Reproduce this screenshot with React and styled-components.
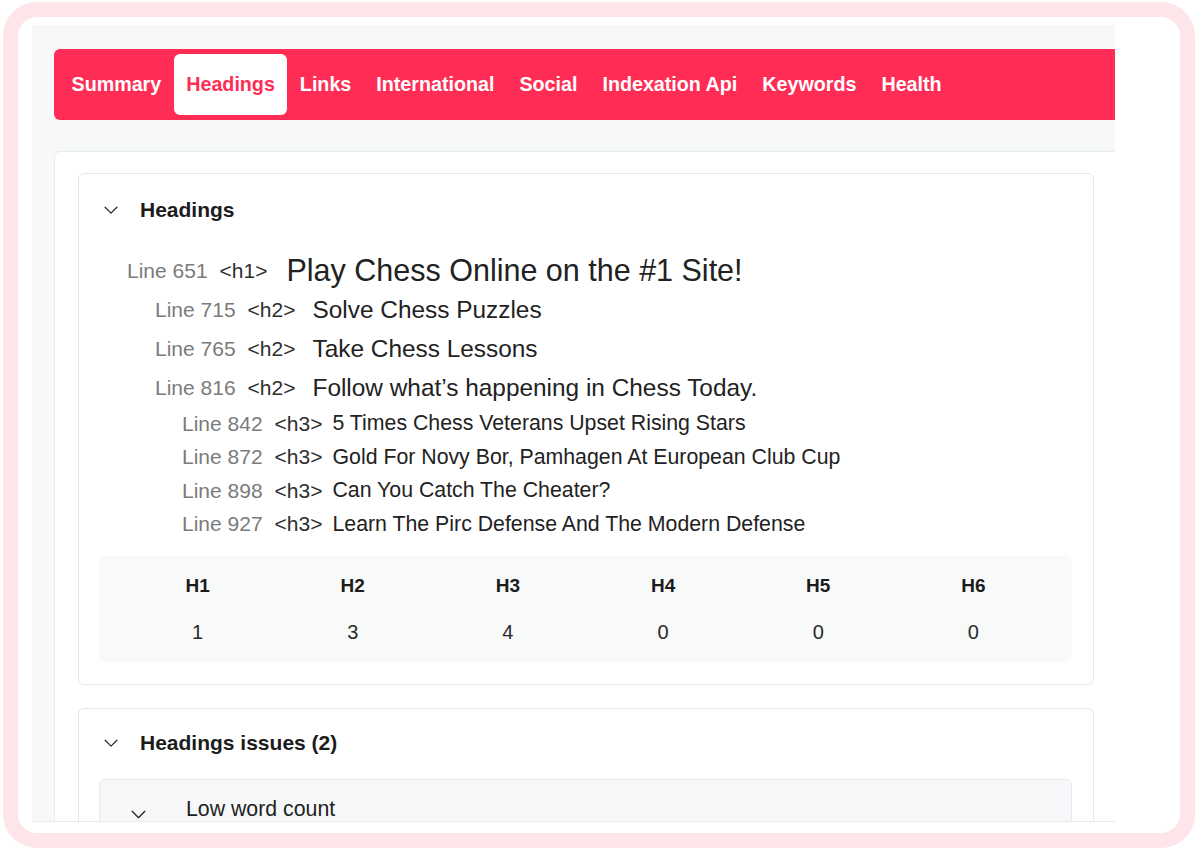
import React from 'react'
import styled, { createGlobalStyle } from 'styled-components'

const GlobalStyle = createGlobalStyle`
* {
  margin: 0;
  padding: 0;
  box-sizing: border-box;
}
body {
  background: #ffffff;
  font-family: 'Liberation Sans', Arial, sans-serif;
  color: #1f1f1f;
}
`

const Frame = styled.div`
  margin: 2px 3px;
  width: 1192px;
  height: 846px;
  border: 15px solid #fde5e9;
  border-radius: 34px;
  background: #ffffff;
  padding: 8px 0 0 14px;
`

const Viewport = styled.div`
  width: 1083px;
  height: 797px;
  overflow: hidden;
  background: #f7f8f8;
  padding: 24px 0 0 22px;
  border-bottom: 1px solid #e8ebee;
`

const Page = styled.div`
  width: 1070px;
  display: flex;
  flex-direction: column;
  gap: 31px;
`

const TabBar = styled.nav`
  height: 71px;
  background: #ff2d55;
  border-radius: 6px;
  padding: 5px;
  display: flex;
  align-items: stretch;
`

const Tab = styled.div`
  display: flex;
  align-items: center;
  padding: 0 12.5px;
  border-radius: 6px;
  font-size: 19.7px;
  font-weight: 700;
  color: ${p => (p.active ? '#ff2d55' : '#ffffff')};
  background: ${p => (p.active ? '#ffffff' : 'transparent')};
`

const OuterCard = styled.div`
  background: #ffffff;
  border: 1px solid #e8ecef;
  border-radius: 6px;
  padding: 21px 29px 40px 23px;
  display: flex;
  flex-direction: column;
  gap: 23px;
`

const Section = styled.section`
  border: 1px solid #e3e7eb;
  border-radius: 6px;
  background: #ffffff;
  padding-bottom: 22px;
`

const SectionHeader = styled.div`
  height: ${p => p.h}px;
  display: flex;
  align-items: center;
  padding-left: 25px;
  gap: 22px;
  font-size: 21px;
  font-weight: 700;
  color: #1c1c1c;
`

const List = styled.div`
  margin-top: 3px;
  display: flex;
  flex-direction: column;
`

const levelStyle = {
  1: { indent: 48, height: 40, size: 30.5, gap: 19 },
  2: { indent: 76, height: 39, size: 24.4, gap: 17 },
  3: { indent: 103, height: 33.5, size: 21.3, gap: 10 },
}

const Row = styled.div`
  height: ${p => levelStyle[p.level].height}px;
  padding-left: ${p => levelStyle[p.level].indent}px;
  display: flex;
  align-items: center;
  white-space: nowrap;
`

const Label = styled.span`
  font-size: 21px;
  color: #7b7b7b;
  margin-right: 12px;
  position: relative;
  top: ${p => (p.level === 1 ? 2 : 1)}px;
`

const Tag = styled.span`
  font-size: 21px;
  color: #2e2e2e;
  margin-right: ${p => levelStyle[p.level].gap}px;
  position: relative;
  top: ${p => (p.level === 1 ? 2 : 1)}px;
`

const Text = styled.span`
  font-size: ${p => levelStyle[p.level].size}px;
  color: #222222;
  position: relative;
  top: 1px;
`

const Counts = styled.div`
  margin: 16px 21px 0 20px;
  background: #f8f9f9;
  border-radius: 6px;
  padding: 17px 21px 17px;
  display: grid;
  grid-template-columns: repeat(6, 1fr);
  row-gap: 20px;
  text-align: center;
`

const CountHead = styled.div`
  font-size: 19px;
  font-weight: 700;
  line-height: 26px;
  color: #1c1c1c;
`

const CountValue = styled.div`
  font-size: 20px;
  line-height: 26px;
  color: #2a2a2a;
`

const Issue = styled.div`
  margin: 2px 21px 0 20px;
  height: 120px;
  background: #f7f8f9;
  border: 1px solid #e8ebee;
  border-radius: 6px;
  display: flex;
  align-items: flex-start;
  padding: 17px 0 0 31px;
  gap: 40px;
  font-size: 21.3px;
  color: #222222;
`

const IssueChevron = styled.span`
  padding-top: 13px;
  display: flex;
`

const Chevron = ({ w = 14 }) => (
  <svg width={w} height={w * 0.6} viewBox="0 0 16 10" fill="none">
    <polyline points="1,1.5 8,8.5 15,1.5" stroke="#2a2a2a" strokeWidth="1.5" strokeLinejoin="round" strokeLinecap="round" />
  </svg>
)

const tabs = [
  { name: 'Summary' },
  { name: 'Headings', active: true },
  { name: 'Links' },
  { name: 'International' },
  { name: 'Social' },
  { name: 'Indexation Api' },
  { name: 'Keywords' },
  { name: 'Health' },
]

const headings = [
  { line: 651, level: 1, text: 'Play Chess Online on the #1 Site!' },
  { line: 715, level: 2, text: 'Solve Chess Puzzles' },
  { line: 765, level: 2, text: 'Take Chess Lessons' },
  { line: 816, level: 2, text: 'Follow what\u2019s happening in Chess Today.' },
  { line: 842, level: 3, text: '5 Times Chess Veterans Upset Rising Stars' },
  { line: 872, level: 3, text: 'Gold For Novy Bor, Pamhagen At European Club Cup' },
  { line: 898, level: 3, text: 'Can You Catch The Cheater?' },
  { line: 927, level: 3, text: 'Learn The Pirc Defense And The Modern Defense' },
]

const counts = [
  ['H1', 1],
  ['H2', 3],
  ['H3', 4],
  ['H4', 0],
  ['H5', 0],
  ['H6', 0],
]

export default function App() {
  return (
    <>
      <GlobalStyle />
      <Frame>
        <Viewport>
          <Page>
            <TabBar>
              {tabs.map(t => (
                <Tab key={t.name} active={t.active}>
                  {t.name}
                </Tab>
              ))}
            </TabBar>
            <OuterCard>
              <Section>
                <SectionHeader h={72}>
                  <Chevron />
                  Headings
                </SectionHeader>
                <List>
                  {headings.map(h => (
                    <Row key={h.line} level={h.level}>
                      <Label level={h.level}>Line {h.line}</Label>
                      <Tag level={h.level}>{`<h${h.level}>`}</Tag>
                      <Text level={h.level}>{h.text}</Text>
                    </Row>
                  ))}
                </List>
                <Counts>
                  {counts.map(([k]) => (
                    <CountHead key={k}>{k}</CountHead>
                  ))}
                  {counts.map(([k, v]) => (
                    <CountValue key={k}>{v}</CountValue>
                  ))}
                </Counts>
              </Section>
              <Section>
                <SectionHeader h={68}>
                  <Chevron />
                  Headings issues (2)
                </SectionHeader>
                <Issue>
                  <IssueChevron>
                    <Chevron w={15} />
                  </IssueChevron>
                  Low word count
                </Issue>
              </Section>
            </OuterCard>
          </Page>
        </Viewport>
      </Frame>
    </>
  )
}
